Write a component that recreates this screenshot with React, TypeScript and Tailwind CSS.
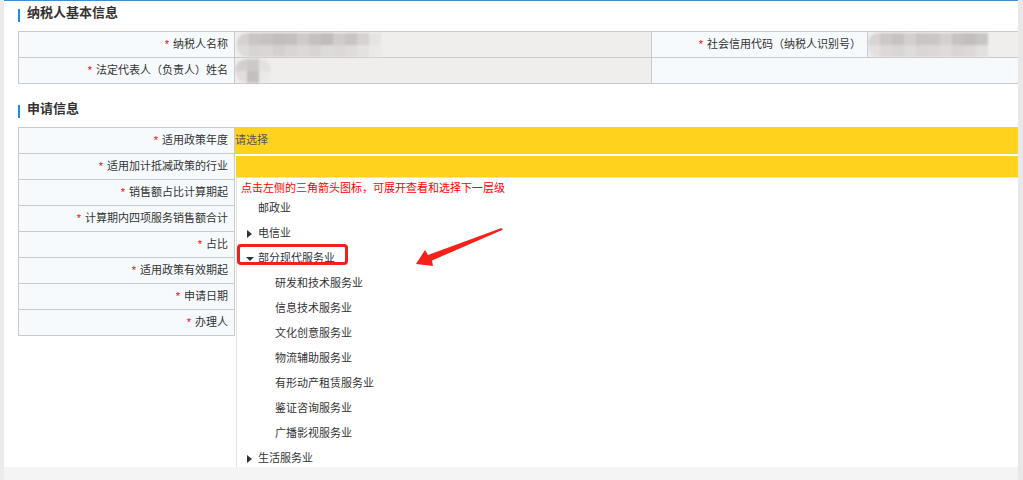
import React from "react";

const FONT = "font-['Liberation_Sans','Noto_Sans_CJK_SC',sans-serif]";

function Mosaic({ rows, cell = 12, className = "" }: { rows: string[][]; cell?: number; className?: string }) {
  return (
    <div className={`flex flex-col blur-[1px] overflow-hidden ${className}`}>
      {rows.map((r, i) => (
        <div key={i} className="flex">
          {r.map((c, j) => (
            <div key={j} style={{ background: c, width: cell, height: cell }} />
          ))}
        </div>
      ))}
    </div>
  );
}

function SectionTitle({ text, className = "" }: { text: string; className?: string }) {
  return (
    <div className={`flex items-start gap-[7px] ${className}`}>
      <div className="w-[2px] h-[13px] mt-[4px] bg-[#1a8cf0]" />
      <span className="text-[13px] leading-[16px] font-bold text-[#333]">{text}</span>
    </div>
  );
}

function Label({ text, className = "" }: { text: string; className?: string }) {
  return (
    <div className={`h-[26px] flex items-center justify-end pr-[6px] bg-[#f7fafc] border-r border-b border-[#cacaca] text-[11px] text-[#333] ${className}`}>
      <span className="text-[#f00] mr-[4px]">*</span>
      {text}
    </div>
  );
}

function RightTri() {
  return (
    <svg width="5" height="8" viewBox="0 0 5 8" className="block">
      <polygon points="0,0 5,4 0,8" fill="#333" />
    </svg>
  );
}

function DownTri() {
  return (
    <svg width="8" height="4" viewBox="0 0 8 4" className="block">
      <polygon points="0,0 8,0 4,4" fill="#333" />
    </svg>
  );
}

const children = [
  "研发和技术服务业",
  "信息技术服务业",
  "文化创意服务业",
  "物流辅助服务业",
  "有形动产租赁服务业",
  "鉴证咨询服务业",
  "广播影视服务业",
];

const applyLabels = [
  "销售额占比计算期起",
  "计算期内四项服务销售额合计",
  "占比",
  "适用政策有效期起",
  "申请日期",
  "办理人",
];

export default function App() {
  return (
    <div className={`w-full h-[480px] flex bg-[#f4f4f4] overflow-hidden ${FONT}`}>
      <div className="w-[4px] h-full bg-[#ebebeb]" />
      <div className="flex-1 flex flex-col">
        <div className="h-[467px] bg-white border-t border-[#3f8fd0] relative overflow-hidden pl-[14px]">
          {/* 纳税人基本信息 */}
          <SectionTitle text="纳税人基本信息" className="h-[30px] pt-[4px]" />
          <div className="grid grid-cols-[216px_417px_216px_1fr] border-t border-l border-[#cacaca]">
            <Label text="纳税人名称" />
            <div className="h-[26px] bg-[#f0eded] border-r border-b border-[#cacaca] flex items-center pl-[2px]">
              <Mosaic
                className="rounded-l-[10px]"
                rows={[
                  ["#d5d1d1", "#c9c5c5", "#c6c2c2", "#c2bebe", "#c4c0c0", "#cfcbcb", "#c5c1c1", "#c0bcbc", "#d0cccc", "#c8c4c4", "#d6d2d2", "#e6e3e3"],
                  ["#dedbdb", "#d8d4d4", "#dad6d6", "#d4d0d0", "#d9d5d5", "#dcd8d8", "#d8d4d4", "#dddada", "#dcd8d8", "#dfdbdb", "#e4e1e1", "#ebe8e8"],
                ]}
              />
            </div>
            <Label text="社会信用代码（纳税人识别号）" />
            <div className="h-[26px] bg-[#f0eded] border-b border-[#cacaca] flex items-center">
              <Mosaic
                className="rounded-l-[10px]"
                rows={[
                  ["#d8d4d4", "#cdc9c9", "#c7c3c3", "#d3cfcf", "#c9c5c5", "#cbc7c7", "#d4d0d0", "#c6c2c2", "#c2bebe", "#c9c5c5"],
                  ["#e3e0e0", "#dcd8d8", "#d9d5d5", "#dedbdb", "#dad6d6", "#dcd8d8", "#dfdbdb", "#d9d5d5", "#dcd8d8", "#e2dfdf"],
                ]}
              />
            </div>
            <Label text="法定代表人（负责人）姓名" />
            <div className="h-[26px] bg-[#f0eded] border-r border-b border-[#cacaca] flex items-center">
              <Mosaic
                className="rounded-full"
                rows={[
                  ["#d3cfcf", "#cdc9c9", "#e3e0e0"],
                  ["#e0dddd", "#c4c0c0", "#ebe8e8"],
                ]}
              />
            </div>
            <div className="col-span-2 h-[26px] bg-[#f7fafc] border-b border-[#cacaca]" />
          </div>

          {/* 申请信息 */}
          <SectionTitle text="申请信息" className="h-[43px] pt-[17px]" />
          <div className="grid grid-cols-[216px_1fr] border-t border-l border-[#cacaca]">
            <Label text="适用政策年度" />
            <div className="h-[26px] bg-[#ffd21e] border-b border-[#cacaca] flex items-center text-[11px] text-[#555]">
              请选择
            </div>
            <Label text="适用加计抵减政策的行业" />
            <div className="h-[26px] relative">
              <div className="ml-[1px] mt-[2px] h-[21px] bg-[#ffd21e]" />
              {/* dropdown tree */}
              <div className="absolute left-[1px] right-0 top-[23px] h-[290px] bg-white border-t border-l border-[#e2e2e2] text-[11px] text-[#333]">
                <div className="h-[18px] pt-[3px] pl-[4px] leading-[15px] text-[#f00]">
                  点击左侧的三角箭头图标，可展开查看和选择下一层级
                </div>
                <div className="h-[25px] flex items-center pl-[21px]">邮政业</div>
                <div className="h-[25px] flex items-center pl-[10px]">
                  <span className="w-[11px]"><RightTri /></span>
                  电信业
                </div>
                <div className="h-[25px] flex items-center pl-[9px]">
                  <span className="w-[12px]"><DownTri /></span>
                  部分现代服务业
                </div>
                {children.map((c) => (
                  <div key={c} className="h-[25px] flex items-center pl-[38px]">
                    {c}
                  </div>
                ))}
                <div className="h-[25px] flex items-center pl-[10px]">
                  <span className="w-[11px]"><RightTri /></span>
                  生活服务业
                </div>

                {/* annotation: red box */}
                <div className="absolute left-0 top-[66px] w-[111px] h-[21px] border-[3px] border-[#f0201c] rounded-[4px]" />
                {/* annotation: red arrow */}
                <svg width="94" height="44" viewBox="0 0 94 44" className="absolute left-[175px] top-[47px]">
                  <polygon points="4,39 13,25 16,30 89.5,3 90.8,4.8 20,35.5 21,41" fill="#f5221b" />
                </svg>
              </div>
            </div>
            {applyLabels.map((l) => (
              <React.Fragment key={l}>
                <Label text={l} />
                <div className="h-[26px]" />
              </React.Fragment>
            ))}
          </div>
        </div>
      </div>
      <div className="w-[5px] h-full bg-[#e8e8e8]" />
    </div>
  );
}
